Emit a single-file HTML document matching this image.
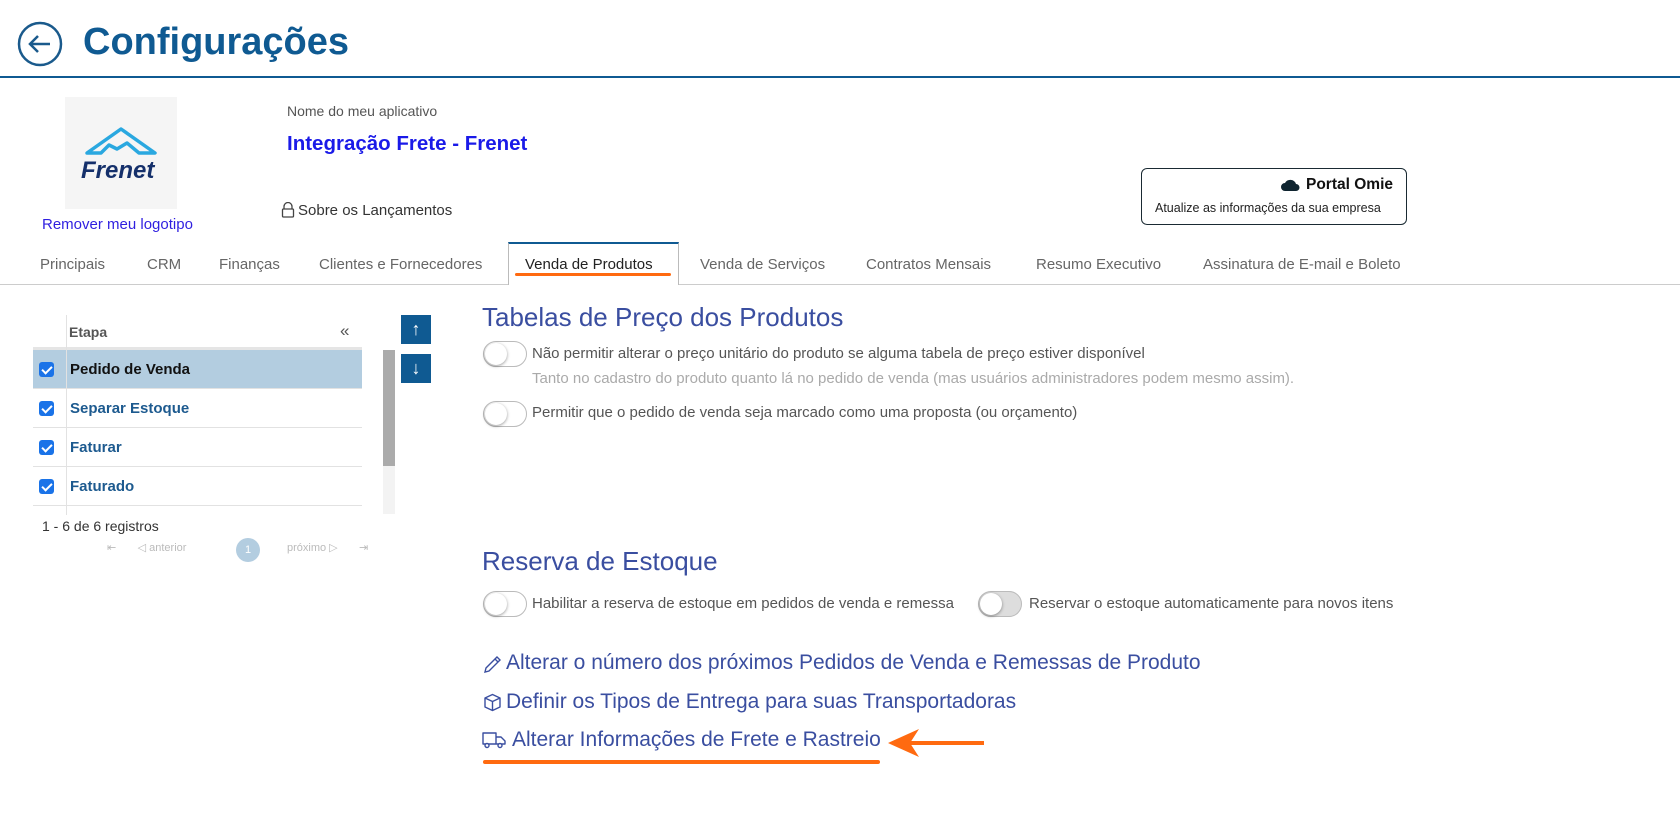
<!DOCTYPE html>
<html><head><meta charset="utf-8"><style>
*{box-sizing:border-box;margin:0;padding:0}
body{width:1680px;height:837px;overflow:hidden;background:#fff;font-family:"Liberation Sans",sans-serif;color:#444;position:relative}
.a{position:absolute;white-space:nowrap}
.tab{position:absolute;top:256px;font-size:15px;color:#666}
.row{position:absolute;left:33px;width:329px;height:39px;border-bottom:1px solid #e2e2e2}
.cb{position:absolute;left:6px;top:12px;width:15px;height:15px;background:#1a73e8;border-radius:3px}
.cb:after{content:"";position:absolute;left:5px;top:2px;width:4px;height:8px;border:solid #fff;border-width:0 2px 2px 0;transform:rotate(45deg)}
.rt{position:absolute;left:37px;top:11px;font-size:15px;font-weight:bold;color:#1d5a8f}
.tg{position:absolute;width:44px;height:26px;border:1px solid #bbb;border-radius:13px;background:#fff}
.tg:after{content:"";position:absolute;left:1px;top:1px;width:22px;height:22px;border-radius:50%;background:#fff;box-shadow:0 1px 3px rgba(0,0,0,.4)}
.lk{position:absolute;left:483px;font-size:21px;color:#3a4ea0}
</style></head><body>
<svg class="a" style="left:17px;top:21px" width="46" height="46" viewBox="0 0 46 46"><circle cx="23" cy="23" r="21" fill="none" stroke="#1a5a8c" stroke-width="2.5"/><path d="M33 23H14M21 15l-8 8 8 8" fill="none" stroke="#1a5a8c" stroke-width="2.5"/></svg>
<div class="a" style="left:83px;top:21px;font-size:38px;font-weight:bold;color:#0f5a92">Configurações</div>
<div class="a" style="left:0;top:76px;width:1680px;height:2px;background:#0f5a92"></div>
<div class="a" style="left:65px;top:97px;width:112px;height:112px;background:#f5f5f5"></div>
<svg class="a" style="left:83px;top:125px" width="76" height="30" viewBox="0 0 76 30"><path d="M4 28L38 4 72 28H56L44 18 34 24 26 20 18 28Z" fill="none" stroke="#2aa8e0" stroke-width="3.5" stroke-linejoin="round"/></svg>
<div class="a" style="left:81px;top:157px;font-size:24px;font-weight:bold;font-style:italic;color:#15306b">Frenet</div>
<div class="a" style="left:42px;top:216px;font-size:15px;color:#2f1fe0">Remover meu logotipo</div>
<div class="a" style="left:287px;top:103px;font-size:14px;color:#555">Nome do meu aplicativo</div>
<div class="a" style="left:287px;top:132px;font-size:20.5px;font-weight:bold;color:#1a1ae8">Integração Frete - Frenet</div>
<svg class="a" style="left:281px;top:202px" width="14" height="16" viewBox="0 0 14 16"><path d="M3 7V4.5a4 4 0 018 0V7" fill="none" stroke="#444" stroke-width="1.3"/><rect x="1.5" y="7" width="11" height="8" rx="1" fill="none" stroke="#444" stroke-width="1.3"/></svg>
<div class="a" style="left:298px;top:202px;font-size:15px;color:#333">Sobre os Lançamentos</div>
<div class="a" style="left:1141px;top:168px;width:266px;height:57px;border:1px solid #1a2a33;border-radius:6px"></div>
<svg class="a" style="left:1280px;top:178px" width="20" height="14" viewBox="0 0 20 14"><path d="M5 13a4 4 0 010-8 6 6 0 0111 1 3.5 3.5 0 010 7Z" fill="#0f2430"/></svg>
<div class="a" style="left:1306px;top:176px;font-size:15.5px;font-weight:bold;color:#111">Portal Omie</div>
<div class="a" style="left:1155px;top:201px;font-size:12.5px;color:#222">Atualize as informações da sua empresa</div>
<div class="a" style="left:0;top:284px;width:1680px;height:1px;background:#ccc"></div>
<div class="a" style="left:508px;top:242px;width:171px;height:43px;border:1px solid #bbb;border-top:2px solid #0f5a92;border-bottom:none;background:#fff"></div>
<div class="a" style="left:515px;top:273px;width:156px;height:3px;background:#ff6a10;border-radius:2px"></div>
<div class="tab" style="left:40px">Principais</div>
<div class="tab" style="left:147px">CRM</div>
<div class="tab" style="left:219px">Finanças</div>
<div class="tab" style="left:319px">Clientes e Fornecedores</div>
<div class="tab" style="left:525px;color:#222">Venda de Produtos</div>
<div class="tab" style="left:700px">Venda de Serviços</div>
<div class="tab" style="left:866px">Contratos Mensais</div>
<div class="tab" style="left:1036px">Resumo Executivo</div>
<div class="tab" style="left:1203px">Assinatura de E-mail e Boleto</div>
<div class="a" style="left:33px;top:315px;width:329px;height:35px;border-bottom:3px solid #e5e5e5"></div>
<div class="a" style="left:66px;top:315px;width:1px;height:200px;background:#e2e2e2"></div>
<div class="a" style="left:69px;top:324px;font-size:14px;font-weight:bold;color:#555">Etapa</div>
<div class="a" style="left:340px;top:321px;font-size:17px;color:#555">«</div>
<div class="row" style="top:350px;background:#b3cde0"><div class="cb"></div><div class="rt" style="color:#111">Pedido de Venda</div></div>
<div class="row" style="top:389px"><div class="cb"></div><div class="rt">Separar Estoque</div></div>
<div class="row" style="top:428px"><div class="cb"></div><div class="rt">Faturar</div></div>
<div class="row" style="top:467px"><div class="cb"></div><div class="rt">Faturado</div></div>
<div class="a" style="left:66px;top:350px;width:1px;height:165px;background:#e2e2e2"></div>
<div class="a" style="left:383px;top:350px;width:12px;height:164px;background:#f3f3f3"></div>
<div class="a" style="left:383px;top:350px;width:12px;height:116px;background:#ababab"></div>
<div class="a" style="left:401px;top:315px;width:30px;height:29px;background:#0f5a92;color:#fff;font-size:18px;text-align:center;line-height:29px">↑</div>
<div class="a" style="left:401px;top:354px;width:30px;height:29px;background:#0f5a92;color:#fff;font-size:18px;text-align:center;line-height:29px">↓</div>
<div class="a" style="left:42px;top:518px;font-size:14px;color:#333">1 - 6 de 6 registros</div>
<div class="a" style="left:107px;top:541px;font-size:11px;color:#bbb">⇤&nbsp;&nbsp;&nbsp;&nbsp;&nbsp;&nbsp;&nbsp;◁ anterior</div>
<div class="a" style="left:236px;top:538px;width:24px;height:24px;border-radius:50%;background:#b3cde0;color:#fff;font-size:11px;text-align:center;line-height:24px">1</div>
<div class="a" style="left:287px;top:541px;font-size:11px;color:#bbb">próximo ▷&nbsp;&nbsp;&nbsp;&nbsp;&nbsp;&nbsp;&nbsp;⇥</div>
<div class="a" style="left:482px;top:302px;font-size:26px;color:#3a4ea0">Tabelas de Preço dos Produtos</div>
<div class="tg" style="left:483px;top:341px"></div>
<div class="a" style="left:532px;top:345px;font-size:15px;color:#555">Não permitir alterar o preço unitário do produto se alguma tabela de preço estiver disponível</div>
<div class="a" style="left:532px;top:370px;font-size:15px;color:#aaa">Tanto no cadastro do produto quanto lá no pedido de venda (mas usuários administradores podem mesmo assim).</div>
<div class="tg" style="left:483px;top:401px"></div>
<div class="a" style="left:532px;top:404px;font-size:15px;color:#555">Permitir que o pedido de venda seja marcado como uma proposta (ou orçamento)</div>
<div class="a" style="left:482px;top:546px;font-size:26px;color:#3a4ea0">Reserva de Estoque</div>
<div class="tg" style="left:483px;top:591px"></div>
<div class="a" style="left:532px;top:595px;font-size:15px;color:#555">Habilitar a reserva de estoque em pedidos de venda e remessa</div>
<div class="tg" style="left:978px;top:591px;background:#ddd"></div>
<div class="a" style="left:1029px;top:595px;font-size:15px;color:#555">Reservar o estoque automaticamente para novos itens</div>
<svg class="a" style="left:483px;top:655px" width="19" height="19" viewBox="0 0 19 19"><path d="M2 17l1-4L14 2l3 3L6 16Z M12 4l3 3" fill="none" stroke="#3a4ea0" stroke-width="1.4"/></svg>
<div class="lk" style="left:506px;top:651px">Alterar o número dos próximos Pedidos de Venda e Remessas de Produto</div>
<svg class="a" style="left:483px;top:693px" width="19" height="19" viewBox="0 0 19 19"><path d="M9.5 1.5l7.5 3.5v9l-7.5 3.5L2 14V5Z M2 5l7.5 3.5L17 5 M9.5 8.5v9" fill="none" stroke="#3a4ea0" stroke-width="1.4" stroke-linejoin="round"/></svg>
<div class="lk" style="left:506px;top:690px">Definir os Tipos de Entrega para suas Transportadoras</div>
<svg class="a" style="left:482px;top:731px" width="24" height="18" viewBox="0 0 24 18"><path d="M1 2h13v11H1Z M14 6h5l4 4v3h-9" fill="none" stroke="#3a4ea0" stroke-width="1.4" stroke-linejoin="round"/><circle cx="5" cy="14.5" r="2" fill="#fff" stroke="#3a4ea0" stroke-width="1.4"/><circle cx="18" cy="14.5" r="2" fill="#fff" stroke="#3a4ea0" stroke-width="1.4"/></svg>
<div class="lk" style="left:512px;top:728px">Alterar Informações de Frete e Rastreio</div>
<div class="a" style="left:483px;top:760px;width:397px;height:4px;background:#ff6a10;border-radius:2px"></div>
<svg class="a" style="left:886px;top:727px" width="102" height="32" viewBox="0 0 102 32"><path d="M12 16H98" stroke="#ff6a10" stroke-width="4"/><path d="M2 16L33 2 24 16 33 30Z" fill="#ff6a10"/></svg>
</body></html>
